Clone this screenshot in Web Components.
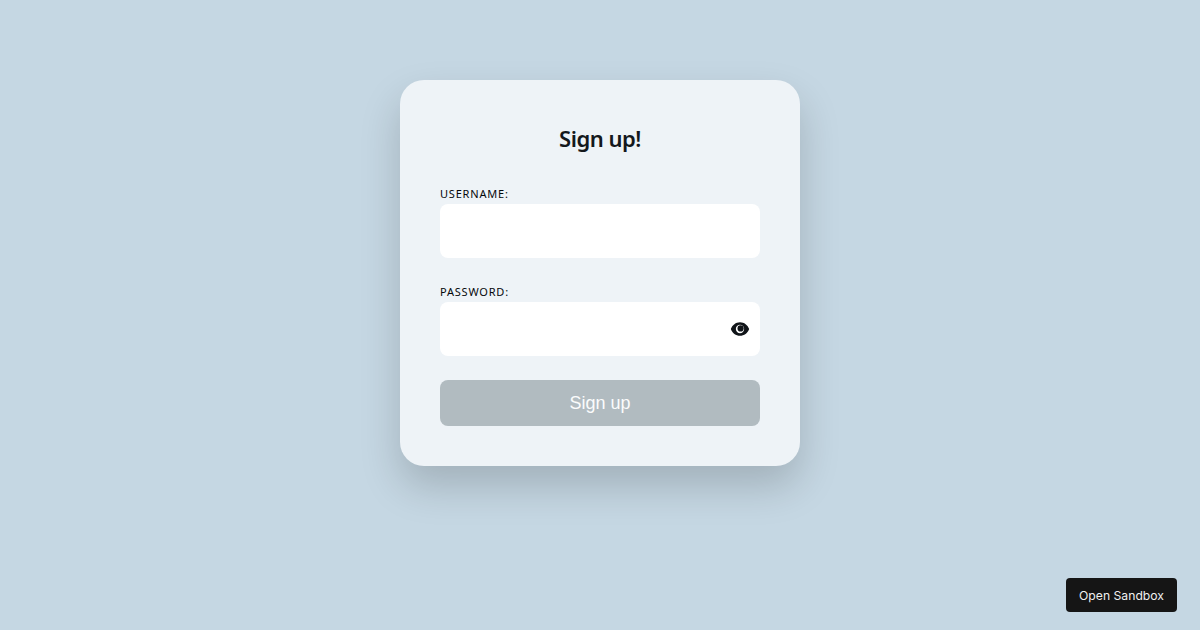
<!DOCTYPE html>
<html lang="en">
<head>
<meta charset="utf-8">
<title>Sign up</title>
<style>
  html, body { margin: 0; height: 100%; }
  body { background: #c5d7e3; overflow: hidden; }
</style>
</head>
<body>
<signup-card heading="Sign up!">
  <form-field label="Username:"></form-field>
  <form-field label="Password:" reveal></form-field>
  <submit-button>Sign up</submit-button>
</signup-card>
<sandbox-button>Open Sandbox</sandbox-button>

<script>
class SignupCard extends HTMLElement {
    constructor() {
        super();
        this.attachShadow({ mode: 'open' });
        this.shadowRoot.innerHTML = `
        <style>
            :host {
                display: block;
                box-sizing: border-box;
                width: 400px;
                margin: 80px auto 0;
                padding: 40px;
                height: 386px;
                border-radius: 24px;
                background: #eef3f7;
                box-shadow: 0 20px 40px rgba(0, 0, 0, .18);
            }
            h1 {
                margin: 0 0 28px;
                height: 38px;
                text-align: center;
                font: 600 22px/37px "Noto Sans", sans-serif;
                letter-spacing: -.5px;
                color: #14181c;
            }
        </style>
        <h1></h1>
        <slot></slot>
        `;
    }

    connectedCallback() {
        this.shadowRoot.querySelector('h1').textContent = this.getAttribute('heading') ?? '';
    }
}
customElements.define('signup-card', SignupCard);

class FormField extends HTMLElement {
    constructor() {
        super();
        this.attachShadow({ mode: 'open' });
        this.shadowRoot.innerHTML = `
        <style>
            :host {
                display: block;
                margin-bottom: 26px;
            }
            :host([reveal]) { margin-bottom: 24px; }
            label {
                display: block;
                height: 16px;
                font: 400 11px/16px "Noto Sans", sans-serif;
                letter-spacing: .8px;
                text-transform: uppercase;
                color: #05080b;
            }
            .box {
                display: flex;
                align-items: center;
                justify-content: flex-end;
                height: 54px;
                margin-top: 2px;
                padding-right: 10px;
                box-sizing: border-box;
                border-radius: 8px;
                background: #fff;
            }
            svg { display: none; width: 20px; height: 20px; fill: #101418; }
            :host([reveal]) svg { display: block; }
        </style>
        <label></label>
        <div class="box">
            <svg viewBox="0 0 24 24"><path fill-rule="evenodd" d="M12 3.800C7 3.800 2.700 7.200 1 12c1.700 4.800 6 8.200 11 8.200s9.300-3.400 11-8.200c-1.700-4.800-6-8.200-11-8.200zM12 7a5 5 0 1 1 0 10a5 5 0 0 1 0-10z"/><circle cx="12.700" cy="11.300" r="3.700"/></svg>
        </div>
        `;
    }

    connectedCallback() {
        this.shadowRoot.querySelector('label').textContent = this.getAttribute('label') ?? '';
    }
}
customElements.define('form-field', FormField);

class SubmitButton extends HTMLElement {
    constructor() {
        super();
        this.attachShadow({ mode: 'open' });
        this.shadowRoot.innerHTML = `
        <style>
            :host {
                display: flex;
                align-items: center;
                justify-content: center;
                height: 46px;
                border-radius: 8px;
                background: #b1bbc0;
                color: #fbfcfc;
                font: 18px "Liberation Sans", Arial, sans-serif;
            }
        </style>
        <slot></slot>
        `;
    }
}
customElements.define('submit-button', SubmitButton);

class SandboxButton extends HTMLElement {
    constructor() {
        super();
        this.attachShadow({ mode: 'open' });
        this.shadowRoot.innerHTML = `
        <style>
            :host {
                position: fixed;
                right: 23px;
                bottom: 18px;
                display: flex;
                align-items: center;
                justify-content: center;
                width: 111px;
                height: 34px;
                border-radius: 4px;
                background: #151515;
                color: #f0f0f0;
                font: 12.2px Inter, sans-serif;
            }
        </style>
        <slot></slot>
        `;
    }
}
customElements.define('sandbox-button', SandboxButton);
</script>
</body>
</html>
